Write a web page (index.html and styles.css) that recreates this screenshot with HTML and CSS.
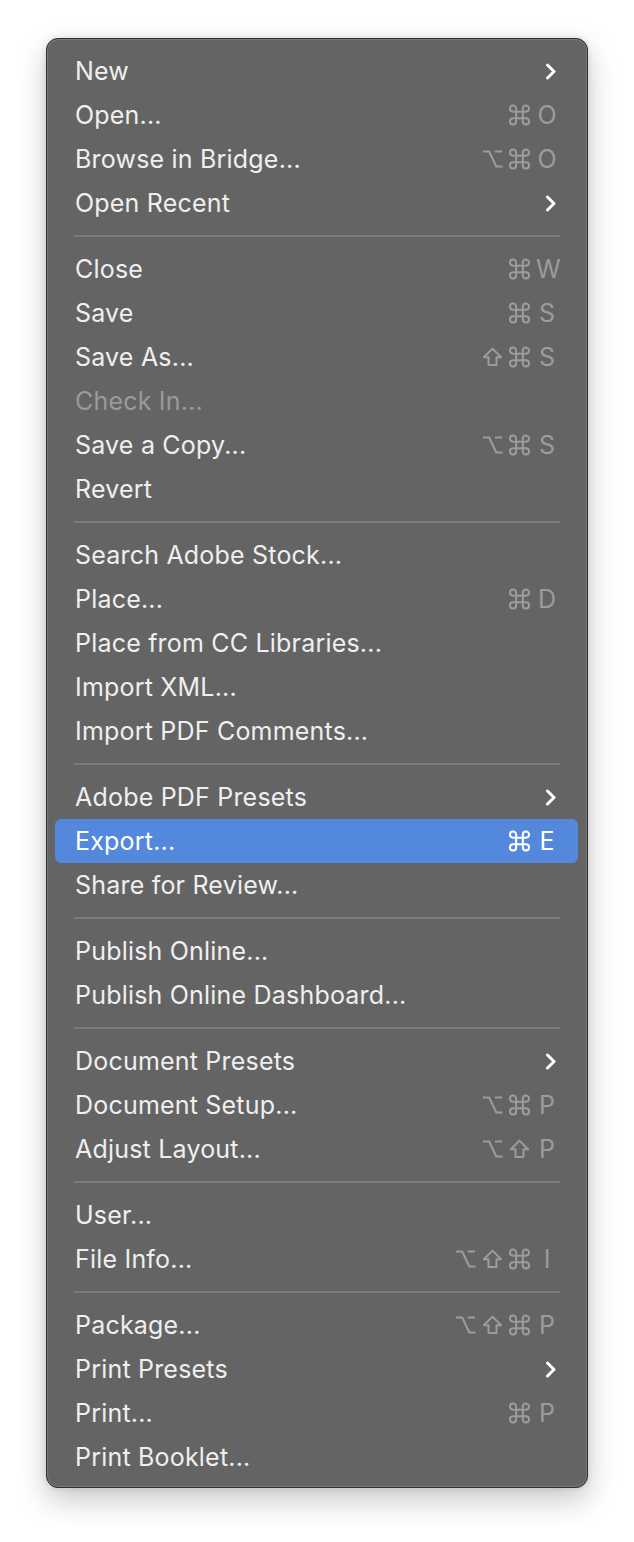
FILE: index.html
```html
<!DOCTYPE html>
<html>
<head>
<meta charset="utf-8">
<link rel="stylesheet" href="styles.css">
</head>
<body>
<div class="menu">
  <div class="item"><span class="label">New</span><svg class="chev" viewBox="0 0 12 17"><polyline points="2.5,2 9,8.5 2.5,15"/></svg></div>
  <div class="item"><span class="label">Open...</span><span class="sc"><svg class="m" viewBox="0 0 22 20"><path d="M14.5 3.25V16.75A3.25 3.25 0 1 0 17.75 13.5H4.25A3.25 3.25 0 1 0 7.5 16.75V3.25A3.25 3.25 0 1 0 4.25 6.5H17.75A3.25 3.25 0 1 0 14.5 3.25Z"/></svg><span class="k">O</span></span></div>
  <div class="item"><span class="label">Browse in Bridge...</span><span class="sc"><svg class="m" viewBox="0 0 22 20"><path d="M1 2.2h6.5l7.5 15.6h6.5M13.5 2.2h7.5"/></svg><svg class="m" viewBox="0 0 22 20"><path d="M14.5 3.25V16.75A3.25 3.25 0 1 0 17.75 13.5H4.25A3.25 3.25 0 1 0 7.5 16.75V3.25A3.25 3.25 0 1 0 4.25 6.5H17.75A3.25 3.25 0 1 0 14.5 3.25Z"/></svg><span class="k">O</span></span></div>
  <div class="item"><span class="label">Open Recent</span><svg class="chev" viewBox="0 0 12 17"><polyline points="2.5,2 9,8.5 2.5,15"/></svg></div>
  <div class="sep"></div>
  <div class="item"><span class="label">Close</span><span class="sc"><svg class="m" viewBox="0 0 22 20"><path d="M14.5 3.25V16.75A3.25 3.25 0 1 0 17.75 13.5H4.25A3.25 3.25 0 1 0 7.5 16.75V3.25A3.25 3.25 0 1 0 4.25 6.5H17.75A3.25 3.25 0 1 0 14.5 3.25Z"/></svg><span class="k">W</span></span></div>
  <div class="item"><span class="label">Save</span><span class="sc"><svg class="m" viewBox="0 0 22 20"><path d="M14.5 3.25V16.75A3.25 3.25 0 1 0 17.75 13.5H4.25A3.25 3.25 0 1 0 7.5 16.75V3.25A3.25 3.25 0 1 0 4.25 6.5H17.75A3.25 3.25 0 1 0 14.5 3.25Z"/></svg><span class="k">S</span></span></div>
  <div class="item"><span class="label">Save As...</span><span class="sc"><svg class="m" viewBox="0 0 22 20"><path d="M11 1.2l9 9h-4.8v8.3h-8.4v-8.3h-4.8z"/></svg><svg class="m" viewBox="0 0 22 20"><path d="M14.5 3.25V16.75A3.25 3.25 0 1 0 17.75 13.5H4.25A3.25 3.25 0 1 0 7.5 16.75V3.25A3.25 3.25 0 1 0 4.25 6.5H17.75A3.25 3.25 0 1 0 14.5 3.25Z"/></svg><span class="k">S</span></span></div>
  <div class="item disabled"><span class="label">Check In...</span></div>
  <div class="item"><span class="label">Save a Copy...</span><span class="sc"><svg class="m" viewBox="0 0 22 20"><path d="M1 2.2h6.5l7.5 15.6h6.5M13.5 2.2h7.5"/></svg><svg class="m" viewBox="0 0 22 20"><path d="M14.5 3.25V16.75A3.25 3.25 0 1 0 17.75 13.5H4.25A3.25 3.25 0 1 0 7.5 16.75V3.25A3.25 3.25 0 1 0 4.25 6.5H17.75A3.25 3.25 0 1 0 14.5 3.25Z"/></svg><span class="k">S</span></span></div>
  <div class="item"><span class="label">Revert</span></div>
  <div class="sep"></div>
  <div class="item"><span class="label">Search Adobe Stock...</span></div>
  <div class="item"><span class="label">Place...</span><span class="sc"><svg class="m" viewBox="0 0 22 20"><path d="M14.5 3.25V16.75A3.25 3.25 0 1 0 17.75 13.5H4.25A3.25 3.25 0 1 0 7.5 16.75V3.25A3.25 3.25 0 1 0 4.25 6.5H17.75A3.25 3.25 0 1 0 14.5 3.25Z"/></svg><span class="k">D</span></span></div>
  <div class="item"><span class="label">Place from CC Libraries...</span></div>
  <div class="item"><span class="label">Import XML...</span></div>
  <div class="item"><span class="label">Import PDF Comments...</span></div>
  <div class="sep"></div>
  <div class="item"><span class="label">Adobe PDF Presets</span><svg class="chev" viewBox="0 0 12 17"><polyline points="2.5,2 9,8.5 2.5,15"/></svg></div>
  <div class="item active"><span class="label">Export...</span><span class="sc"><svg class="m" viewBox="0 0 22 20"><path d="M14.5 3.25V16.75A3.25 3.25 0 1 0 17.75 13.5H4.25A3.25 3.25 0 1 0 7.5 16.75V3.25A3.25 3.25 0 1 0 4.25 6.5H17.75A3.25 3.25 0 1 0 14.5 3.25Z"/></svg><span class="k">E</span></span></div>
  <div class="item"><span class="label">Share for Review...</span></div>
  <div class="sep"></div>
  <div class="item"><span class="label">Publish Online...</span></div>
  <div class="item"><span class="label">Publish Online Dashboard...</span></div>
  <div class="sep"></div>
  <div class="item"><span class="label">Document Presets</span><svg class="chev" viewBox="0 0 12 17"><polyline points="2.5,2 9,8.5 2.5,15"/></svg></div>
  <div class="item"><span class="label">Document Setup...</span><span class="sc"><svg class="m" viewBox="0 0 22 20"><path d="M1 2.2h6.5l7.5 15.6h6.5M13.5 2.2h7.5"/></svg><svg class="m" viewBox="0 0 22 20"><path d="M14.5 3.25V16.75A3.25 3.25 0 1 0 17.75 13.5H4.25A3.25 3.25 0 1 0 7.5 16.75V3.25A3.25 3.25 0 1 0 4.25 6.5H17.75A3.25 3.25 0 1 0 14.5 3.25Z"/></svg><span class="k">P</span></span></div>
  <div class="item"><span class="label">Adjust Layout...</span><span class="sc"><svg class="m" viewBox="0 0 22 20"><path d="M1 2.2h6.5l7.5 15.6h6.5M13.5 2.2h7.5"/></svg><svg class="m" viewBox="0 0 22 20"><path d="M11 1.2l9 9h-4.8v8.3h-8.4v-8.3h-4.8z"/></svg><span class="k">P</span></span></div>
  <div class="sep"></div>
  <div class="item"><span class="label">User...</span></div>
  <div class="item"><span class="label">File Info...</span><span class="sc"><svg class="m" viewBox="0 0 22 20"><path d="M1 2.2h6.5l7.5 15.6h6.5M13.5 2.2h7.5"/></svg><svg class="m" viewBox="0 0 22 20"><path d="M11 1.2l9 9h-4.8v8.3h-8.4v-8.3h-4.8z"/></svg><svg class="m" viewBox="0 0 22 20"><path d="M14.5 3.25V16.75A3.25 3.25 0 1 0 17.75 13.5H4.25A3.25 3.25 0 1 0 7.5 16.75V3.25A3.25 3.25 0 1 0 4.25 6.5H17.75A3.25 3.25 0 1 0 14.5 3.25Z"/></svg><span class="k">I</span></span></div>
  <div class="sep"></div>
  <div class="item"><span class="label">Package...</span><span class="sc"><svg class="m" viewBox="0 0 22 20"><path d="M1 2.2h6.5l7.5 15.6h6.5M13.5 2.2h7.5"/></svg><svg class="m" viewBox="0 0 22 20"><path d="M11 1.2l9 9h-4.8v8.3h-8.4v-8.3h-4.8z"/></svg><svg class="m" viewBox="0 0 22 20"><path d="M14.5 3.25V16.75A3.25 3.25 0 1 0 17.75 13.5H4.25A3.25 3.25 0 1 0 7.5 16.75V3.25A3.25 3.25 0 1 0 4.25 6.5H17.75A3.25 3.25 0 1 0 14.5 3.25Z"/></svg><span class="k">P</span></span></div>
  <div class="item"><span class="label">Print Presets</span><svg class="chev" viewBox="0 0 12 17"><polyline points="2.5,2 9,8.5 2.5,15"/></svg></div>
  <div class="item"><span class="label">Print...</span><span class="sc"><svg class="m" viewBox="0 0 22 20"><path d="M14.5 3.25V16.75A3.25 3.25 0 1 0 17.75 13.5H4.25A3.25 3.25 0 1 0 7.5 16.75V3.25A3.25 3.25 0 1 0 4.25 6.5H17.75A3.25 3.25 0 1 0 14.5 3.25Z"/></svg><span class="k">P</span></span></div>
  <div class="item"><span class="label">Print Booklet...</span></div>
</div>
</body>
</html>
```

FILE: styles.css
```css
html, body {
  margin: 0;
  background: #ffffff;
}
body {
  padding: 38px 46px;
  font-family: Inter, "Noto Sans", sans-serif;
}
.menu {
  width: 542px;
  box-sizing: border-box;
  background: #646464;
  border: 1px solid #2e2e2e;
  border-radius: 12px;
  padding: 10px 9px 8px 8px;
  box-shadow: inset 0 0 0 1px #7a7a7a, 0 12px 30px rgba(0,0,0,0.22), 0 0 6px rgba(0,0,0,0.12);
}
.item {
  height: 44px;
  display: flex;
  align-items: center;
  justify-content: space-between;
  padding: 0 20px 0 20px;
  border-radius: 6px;
  color: #efefef;
  font-size: 25px;
  letter-spacing: 0.2px;
}
.item.disabled {
  color: #9a9a9a;
}
.item.active {
  background: #5388dc;
  color: #ffffff;
}
.sc {
  display: flex;
  align-items: center;
  color: #9c9c9c;
}
.item.active .sc {
  color: #ffffff;
}
.m {
  width: 21px;
  height: 20px;
  margin-right: 6px;
  overflow: visible;
  fill: none;
  stroke: currentColor;
  stroke-width: 2.1;
  stroke-linejoin: round;
}
.k {
  width: 22px;
  text-align: center;
  letter-spacing: 0;
}
.chev {
  width: 12px;
  height: 17px;
  margin-right: 1px;
  fill: none;
  stroke: #ffffff;
  stroke-width: 3;
  stroke-linecap: round;
  stroke-linejoin: round;
}
.sep {
  height: 22px;
  display: flex;
  align-items: center;
  padding: 0 18px 0 19px;
}
.sep::before {
  content: "";
  flex: 1;
  height: 2px;
  background: #7b7b7b;
}
```
